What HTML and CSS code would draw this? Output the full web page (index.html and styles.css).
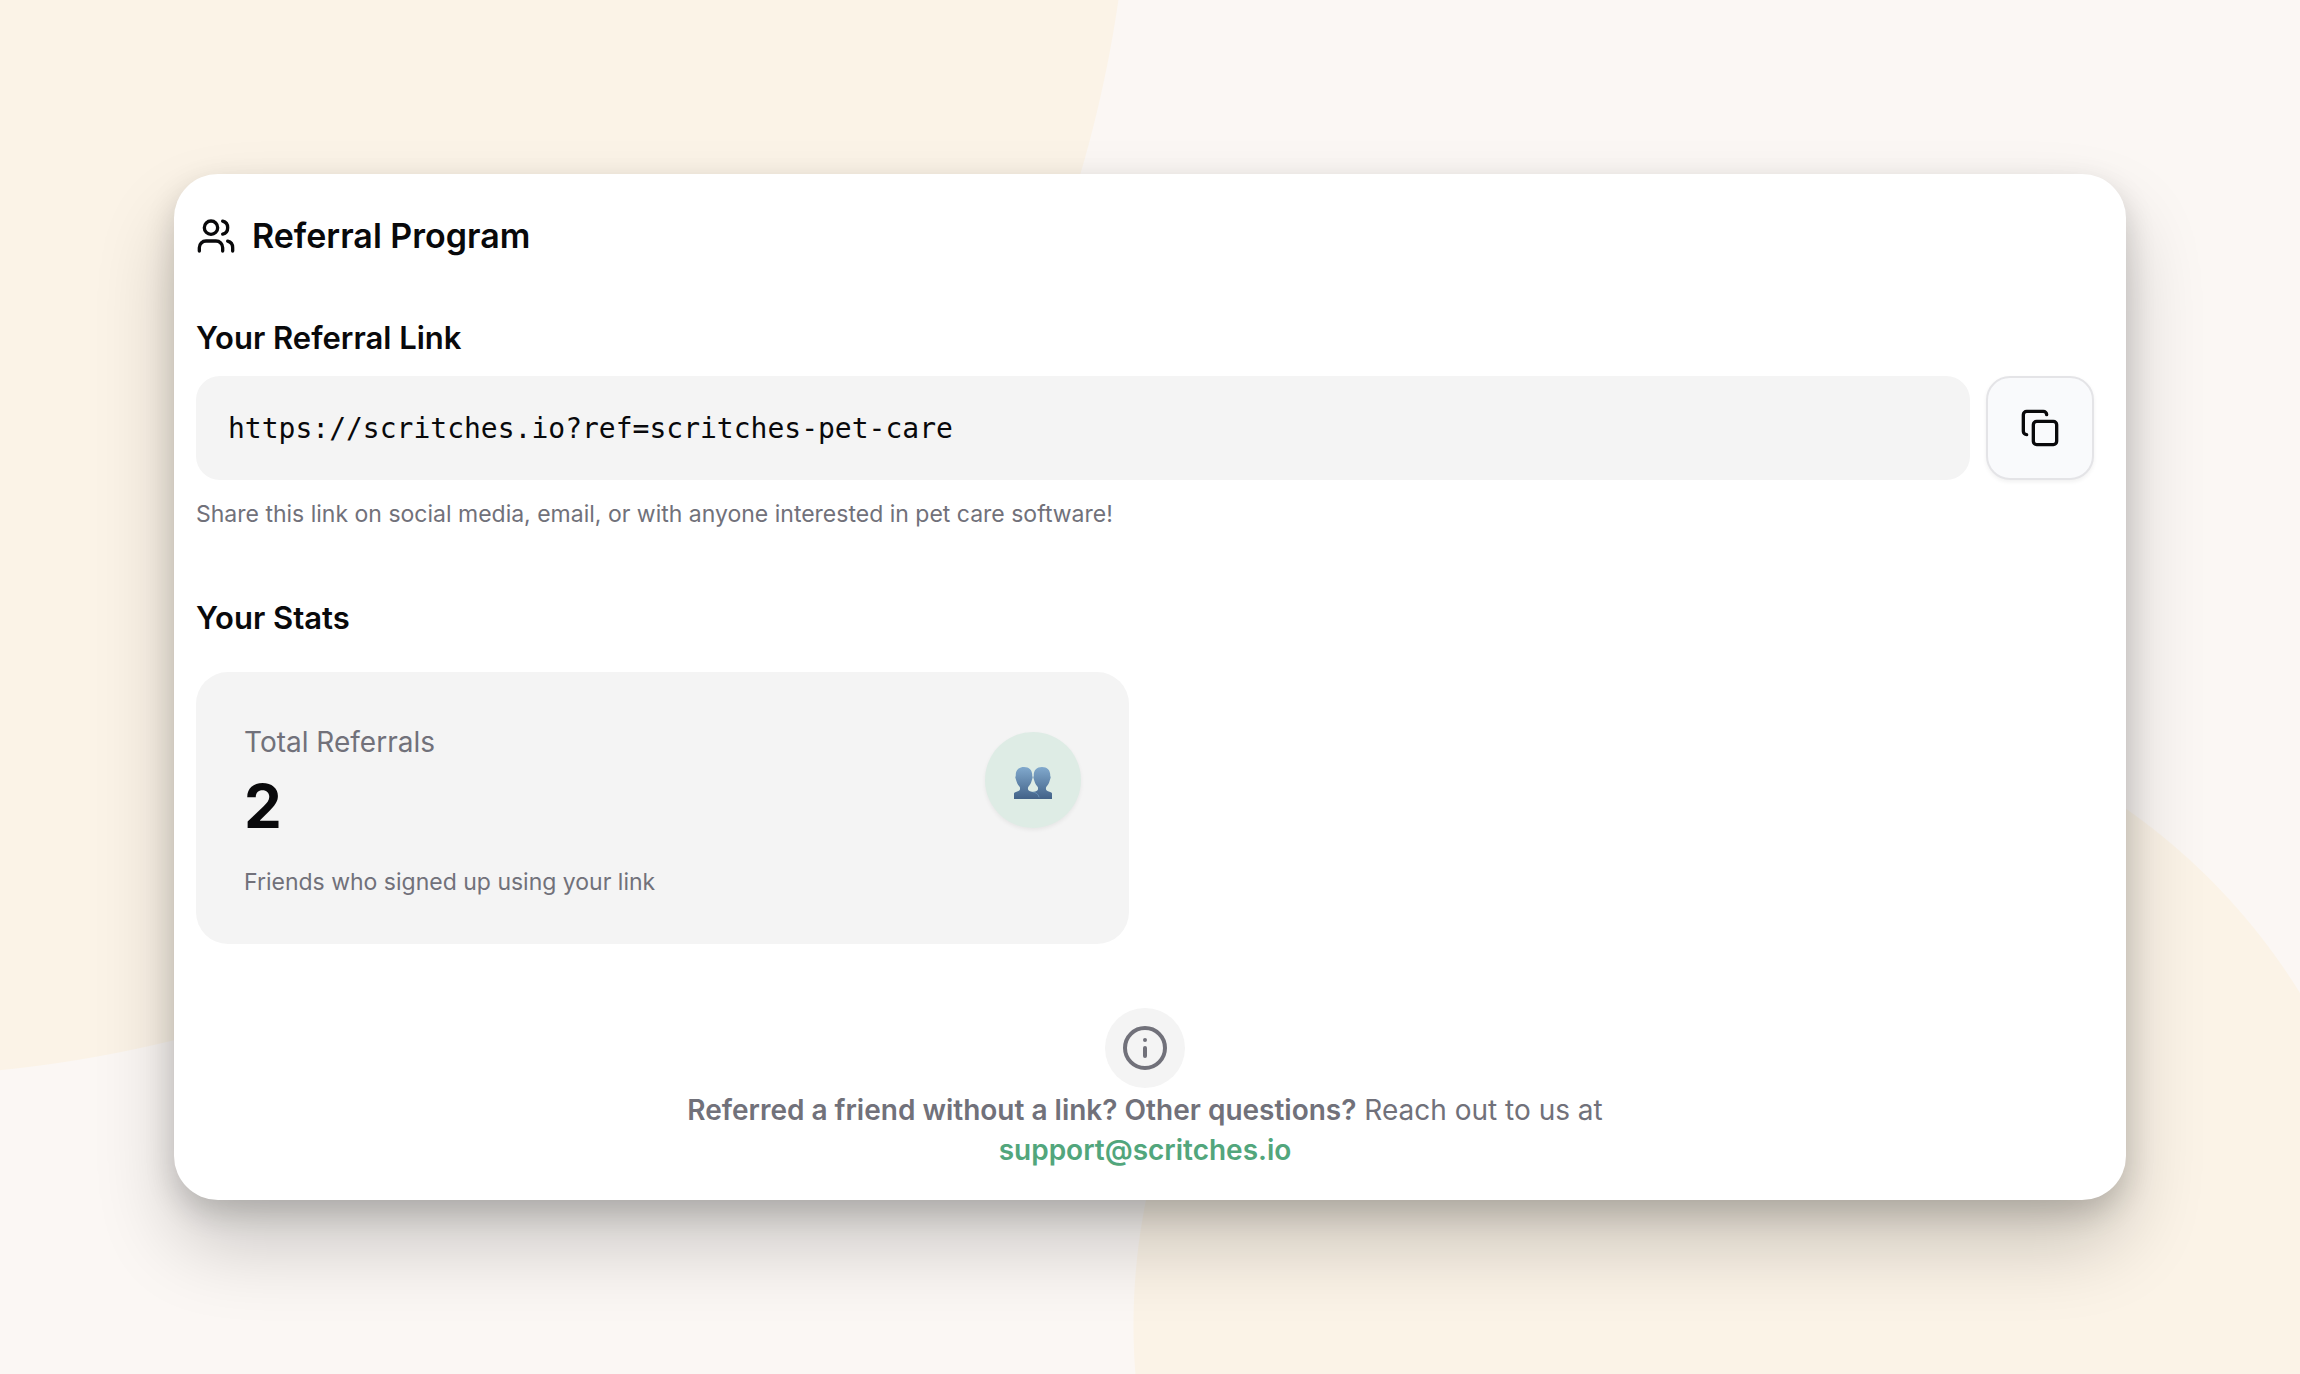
FILE: index.html
```
<!DOCTYPE html>
<html lang="en">
<head>
    <meta charset="UTF-8">
    <meta name="viewport" content="width=device-width, initial-scale=1.0">
    <title>Referral Program</title>
    <link rel="stylesheet" href="styles.css">
</head>
<body>
    <main class="card">
        <h1 class="card-title">
            <svg class="icon-users" viewBox="0 0 24 24" aria-hidden="true">
                <path d="M16 21v-2a4 4 0 0 0-4-4H6a4 4 0 0 0-4 4v2"/>
                <circle cx="9" cy="7" r="4"/>
                <path d="M22 21v-2a4 4 0 0 0-3-3.87"/>
                <path d="M16 3.13a4 4 0 0 1 0 7.75"/>
            </svg>
            Referral Program
        </h1>

        <section class="link-section">
            <h2><label for="referral-link">Your Referral Link</label></h2>
            <div class="link-row">
                <input class="link-input" id="referral-link" type="text" value="https://scritches.io?ref=scritches-pet-care" readonly>
                <button class="copy-btn" type="button" aria-label="Copy link">
                    <svg viewBox="0 0 24 24" aria-hidden="true">
                        <rect x="8" y="8" width="14" height="14" rx="2"/>
                        <path d="M4 16c-1.1 0-2-.9-2-2V4c0-1.1.9-2 2-2h10c1.1 0 2 .9 2 2"/>
                    </svg>
                </button>
            </div>
            <p class="small-text">Share this link on social media, email, or with anyone interested in pet care software!</p>
        </section>

        <section class="stats-section">
            <h2>Your Stats</h2>
            <div class="stats-grid">
                <div class="stat">
                    <div>
                        <p class="stat-label">Total Referrals</p>
                        <p class="stat-value">2</p>
                        <p class="small-text">Friends who signed up using your link</p>
                    </div>
                    <div class="stat-icon">
                        <svg viewBox="0 0 40 34" aria-hidden="true">
                            <defs>
                                <linearGradient id="people" x1="0" y1="0" x2="0" y2="1">
                                    <stop offset="0" stop-color="#81a9cd"/>
                                    <stop offset="1" stop-color="#426288"/>
                                </linearGradient>
                            </defs>
                            <path fill="url(#people)" d="M11 1C5.500 1 2.500 4.500 2.800 9.500L2.300 11.500L3.400 15C4.200 18 5.500 19.500 6.800 21C7.500 23 6.800 24.500 5 25.200C3 26 1 26.200 1 27.500V33H39V27.500C39 26.200 37 26 35 25.200C33.200 24.500 32.500 23 33.200 21C34.500 19.500 35.800 18 36.600 15L37.700 11.500L37.200 9.500C37.500 4.500 34.500 1 29 1C23.500 1 20.500 4.500 20.800 9.500L20.300 11.500L21.400 15C22.200 18 23.500 19.500 24.800 21C25.500 23 24.800 24.500 23 25.200L20 26L17 25.200C15.200 24.500 14.500 23 15.200 21C16.500 19.500 17.800 18 18.600 15L19.700 11.500L19.200 9.500C19.500 4.500 16.500 1 11 1Z"/>
                            <path fill="none" stroke="#6f9cc0" stroke-width="0.700" d="M20 26C23 26.500 25.500 28 26 31"/>
                        </svg>
                    </div>
                </div>
            </div>
        </section>

        <footer class="help">
            <div class="help-icon">
                <svg viewBox="0 0 24 24" aria-hidden="true">
                    <circle cx="12" cy="12" r="10"/>
                    <path d="M12 16v-4"/>
                    <path d="M12 8h.01"/>
                </svg>
            </div>
            <p><strong>Referred a friend without a link? Other questions?</strong> Reach out to us at</p>
            <a href="mailto:support@scritches.io">support@scritches.io</a>
        </footer>
    </main>
</body>
</html>
```
FILE: styles.css
```
* {
    box-sizing: border-box;
    margin: 0;
    padding: 0;
}

body {
    min-height: 100vh;
    padding: 174px;
    background:
        radial-gradient(circle at -126px -181px, #fbf3e7 1257px, transparent 1258px),
        radial-gradient(circle at 1764px 1325px, #fbf3e7 630px, transparent 631px),
        #fbf7f4;
    color: #09090b;
    font-family: Inter, 'Liberation Sans', sans-serif;
}

svg {
    fill: none;
    stroke: currentColor;
    stroke-width: 2;
    stroke-linecap: round;
    stroke-linejoin: round;
}

.card {
    padding: 40px 32px 30px 22px;
    background-color: #fff;
    border-radius: 44px;
    box-shadow: 0 12px 30px rgba(0, 0, 0, 0.16), 0 44px 80px rgba(0, 0, 0, 0.2);
}

.card-title {
    display: flex;
    align-items: center;
    gap: 16px;
    font-size: 34px;
    line-height: 44px;
    font-weight: 600;
}

.icon-users {
    width: 40px;
    height: 40px;
}

h2 {
    font-size: 31px;
    line-height: 40px;
    font-weight: 600;
}

.link-section {
    margin-top: 60px;
}

.link-row {
    display: flex;
    gap: 16px;
    margin-top: 18px;
}

.link-input {
    flex: 1;
    min-width: 0;
    height: 104px;
    padding: 0 32px;
    border: none;
    border-radius: 24px;
    background-color: #f4f4f4;
    color: #09090b;
    font-family: 'DejaVu Sans Mono', monospace;
    font-size: 28px;
}

.copy-btn {
    display: flex;
    align-items: center;
    justify-content: center;
    width: 108px;
    height: 104px;
    border: 2px solid #e4e4e7;
    border-radius: 24px;
    background-color: #f9fafc;
    box-shadow: 0 2px 4px rgba(0, 0, 0, 0.06);
    color: #09090b;
    cursor: pointer;
}

.copy-btn svg {
    width: 40px;
    height: 40px;
}

.small-text {
    color: #71717a;
    font-size: 23px;
    line-height: 32px;
}

.link-section .small-text {
    margin-top: 18px;
}

.stats-section {
    margin-top: 68px;
}

.stats-grid {
    display: grid;
    grid-template-columns: 1fr 1fr;
    gap: 32px;
    margin-top: 34px;
}

.stat {
    display: flex;
    justify-content: space-between;
    padding: 50px 48px 46px;
    border-radius: 32px;
    background-color: #f4f4f4;
}

.stat-label {
    color: #71717a;
    font-size: 28px;
    line-height: 40px;
}

.stat-value {
    margin-bottom: 16px;
    font-size: 60px;
    line-height: 88px;
    font-weight: 700;
}

.stat-icon {
    display: flex;
    align-items: center;
    justify-content: center;
    width: 96px;
    height: 96px;
    margin-top: 10px;
    padding-top: 6px;
    border-radius: 50%;
    background-color: #deece5;
    box-shadow: 0 2px 4px rgba(0, 0, 0, 0.06);
}

.stat-icon svg {
    width: 40px;
    height: 34px;
    stroke: none;
}

.help {
    display: flex;
    flex-direction: column;
    align-items: center;
    margin-top: 64px;
    color: #71717a;
    font-size: 28px;
    line-height: 40px;
}

.help strong {
    font-weight: 600;
}

.help a {
    color: #52a67c;
    font-weight: 600;
    text-decoration: none;
}

.help-icon {
    display: flex;
    align-items: center;
    justify-content: center;
    width: 80px;
    height: 80px;
    margin-bottom: 2px;
    border-radius: 50%;
    background-color: #f4f4f4;
}

.help-icon svg {
    width: 48px;
    height: 48px;
}
```
